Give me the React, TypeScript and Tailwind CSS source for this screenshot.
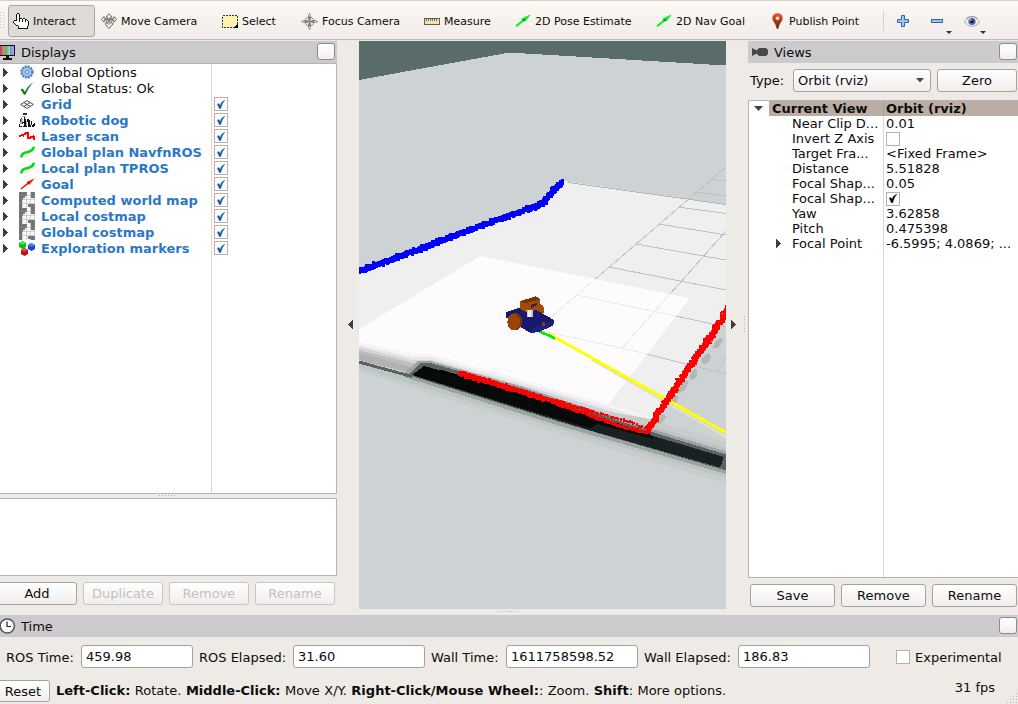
import React from 'react';

type Pt = [number, number];

function seeded(seed: number) {
  let s = seed;
  return () => {
    s = (s * 16807) % 2147483647;
    return s / 2147483647;
  };
}

/* Scan points scattered along a polyline, as one path of small squares. */
function scanPath(points: Pt[], size: number, spread: number, seed: number) {
  const rnd = seeded(seed);
  let d = '';
  for (let i = 0; i < points.length - 1; i++) {
    const [x0, y0] = points[i];
    const [x1, y1] = points[i + 1];
    const n = Math.max(1, Math.round(Math.hypot(x1 - x0, y1 - y0) / 1.5));
    for (let k = 0; k <= n; k++) {
      const x = Math.round(x0 + ((x1 - x0) * k) / n + (rnd() - 0.5) * spread - size / 2);
      const y = Math.round(y0 + ((y1 - y0) * k) / n + (rnd() - 0.5) * spread - size / 2);
      d += `M${x} ${y}h${size}v${size}h-${size}z`;
    }
  }
  return d;
}

/* ---------- icons ---------- */

const HandIcon = () => (
  <svg width="16" height="16" viewBox="0 0 16 16" shapeRendering="crispEdges">
    <path d="M4 1h3v5h7v2h1v6h-1v1H5v-2H3v-2H1V8h3z" fill="#fff" />
    <path d="M4 0h2v1H4zM3 1h1v7H3zM6 1h1v8H6zM7 5h2v1H7zM9 6h1v3H9zM10 5h2v1h-2zM12 6h1v3h-1zM13 6h1v1h-1zM14 7h1v1h-1zM15 8h1v5h-1zM14 13h1v3H5v-3h1v2h8zM1 7h2v1H1zM0 8h1v2H0zM1 10h1v1H1zM2 11h1v1H2zM3 12h2v1H3z" fill="#151515" />
  </svg>
);

const MoveIcon = () => (
  <svg width="16" height="16" viewBox="0 0 16 16" fill="none" stroke="#6b6b6b" strokeWidth="1">
    <path d="M8 .7 11 4H9.300v2.200l3.700-1V3.500l2.500 3L13 9.200V7.600L9.700 8l1.600 2.500 1 .2L8 15.500l-4-4.700h1L6.300 8 3 7.600v1.600L.5 6.500 3 3.500v1.700l3.700 1V4H5z" />
    <path d="m6 5 4 6M10 5l-4 6M3.500 6.500h9M8 5v7" strokeWidth=".8" />
  </svg>
);

const SelectIcon = () => (
  <svg width="16" height="13" viewBox="0 0 16 13" shapeRendering="crispEdges">
    <rect x=".5" y=".5" width="15" height="12" fill="#fff3b0" stroke="#333" strokeDasharray="2 1" />
    <path d="M16 9v4h-4v-1h1v-1h1v-1h1V9z" fill="#000" />
  </svg>
);

const FocusIcon = () => (
  <svg width="17" height="17" viewBox="0 0 17 17" fill="none" stroke="#858585" strokeWidth="1">
    <circle cx="8.500" cy="8.500" r="4.500" />
    <circle cx="8.500" cy="8.500" r="2" />
    <path d="M7.500 6V2.500l1-2 1 2V6M7.500 11v3.500l1 2 1-2V11M6 7.500H2.500l-2 1 2 1H6M11 7.500h3.500l2 1-2 1H11M8.500 4v9M4 8.500h9" />
  </svg>
);

const RulerIcon = () => (
  <svg width="16" height="7" viewBox="0 0 16 7" shapeRendering="crispEdges">
    <rect x=".5" y=".5" width="15" height="6" fill="#f0e2a8" stroke="#5e5e66" />
    <path d="M2.500 1v2M4.500 1v2M6.500 1v2M8.500 1v2M10.500 1v2M12.500 1v2" stroke="#77766a" />
  </svg>
);

const GreenArrowIcon = () => (
  <svg width="16" height="14" viewBox="0 0 16 14">
    <path d="M15.800.2 10.800 7.200 9.300 7 1.800 13 .3 11.500 7 6 6.500 4.500z" fill="#10f030" />
    <path d="m9.300 4.800-1.800.8.200 1.400 1.600.2 1-1.400z" fill="#0a8a20" />
  </svg>
);

const PinIcon = () => (
  <svg width="11" height="16" viewBox="0 0 11 16">
    <defs>
      <linearGradient id="pin" x1="0" y1="0" x2="0" y2="1">
        <stop offset="0" stopColor="#f0562f" />
        <stop offset="1" stopColor="#5a2408" />
      </linearGradient>
    </defs>
    <path d="M5.500.3C2.500.3.3 2.400.3 5.200c0 2 1.500 3.600 2.700 5.600.9 1.500 1.400 3.200 1.700 4.900h1.600c.3-1.700.8-3.400 1.700-4.900 1.200-2 2.700-3.600 2.700-5.600C10.700 2.400 8.500.3 5.500.3z" fill="url(#pin)" />
    <circle cx="5.500" cy="5.200" r="1.700" fill="#f8e6e0" />
  </svg>
);

const PlusIcon = () => (
  <svg width="12" height="12" viewBox="0 0 12 12">
    <path d="M4.500.5h3v4h4v3h-4v4h-3v-4h-4v-3h4z" fill="#9cc3ee" stroke="#2d68ad" />
  </svg>
);

const MinusIcon = () => (
  <svg width="12" height="4" viewBox="0 0 12 4">
    <rect x=".5" y=".5" width="11" height="3" fill="#9cc3ee" stroke="#2d68ad" />
  </svg>
);

const EyeIcon = () => (
  <svg width="16" height="11" viewBox="0 0 16 11">
    <path d="M.5 6C3 1.500 6 1 8 1s5 .5 7.500 5C13 9.500 10.500 10.300 8 10.300S3 9.500.5 6z" fill="#eeeef0" stroke="#aaa9ae" />
    <path d="M2 3C4 .8 6 .5 8 .5s4 .3 6 2.500" fill="none" stroke="#99989e" />
    <circle cx="8" cy="5.500" r="3.600" fill="#5266ad" />
    <circle cx="8" cy="5.500" r="1.700" fill="#101434" />
    <circle cx="6.800" cy="4.300" r=".8" fill="#dde3ff" />
  </svg>
);

const DownArrow = ({ className = '' }: { className?: string }) => (
  <svg width="6" height="3" viewBox="0 0 6 3" className={className}>
    <path d="M0 0h6L3 3z" fill="#303030" />
  </svg>
);

const MonitorIcon = () => (
  <svg width="16" height="16" viewBox="0 0 16 16" shapeRendering="crispEdges" className="shrink-0">
    <defs>
      <linearGradient id="scr" x1="0" y1="0" x2="1" y2="0">
        <stop offset="0" stopColor="#a83a48" />
        <stop offset=".36" stopColor="#d59a9a" />
        <stop offset=".37" stopColor="#48a860" />
        <stop offset=".68" stopColor="#a0dda8" />
        <stop offset=".69" stopColor="#8080dd" />
        <stop offset="1" stopColor="#b0b0ff" />
      </linearGradient>
    </defs>
    <rect x=".5" y="1.500" width="15" height="10" fill="url(#scr)" stroke="#111" />
    <path d="M7 12h3v2h3v2H4v-2h3z" fill="#111" />
  </svg>
);

const ClockIcon = () => (
  <svg width="16" height="16" viewBox="0 0 16 16" className="shrink-0">
    <circle cx="7.300" cy="8" r="7.100" fill="#fff" stroke="#55555a" strokeWidth="1.500" />
    <path d="M7 3.500v5h4" fill="none" stroke="#222" strokeWidth="1.200" />
  </svg>
);

const CameraIcon = () => (
  <svg width="16" height="8" viewBox="0 0 16 8">
    <path d="M0 0l5 2.500V2l2-2h7l2 2v4l-2 2H7L5 6v-.5L0 8z" fill="#464846" />
  </svg>
);

const GearIcon = () => (
  <svg width="14" height="14" viewBox="0 0 14 14">
    <circle cx="7" cy="7" r="5.700" fill="#a9c8ec" stroke="#4e7fbd" strokeWidth="2" strokeDasharray="1.900 1.080" />
    <circle cx="7" cy="7" r="4.700" fill="#a9c8ec" stroke="#5f90cc" />
    <circle cx="7" cy="7" r="1.900" fill="#dfeafa" stroke="#4e7fbd" />
  </svg>
);

const TickIcon = () => (
  <svg width="14" height="13" viewBox="0 0 14 13">
    <path d="M.6 7.500 2.700 6.500l2.200 3.300C7 5.500 9.500 2.200 13.500.2 10.200 3.500 7.700 7.500 5.500 12.700H4z" fill="#1d7a24" />
  </svg>
);

const GridIcon = () => (
  <svg width="14" height="9" viewBox="0 0 14 9" fill="none" stroke="#3a3a3a" strokeWidth=".9">
    <path d="M7 .6 13.400 4.500 7 8.400.6 4.500zM3.800 2.500l6.400 4M10.200 2.500l-6.400 4" />
  </svg>
);

const RobotIcon = () => (
  <svg width="16" height="15" viewBox="0 0 16 15" shapeRendering="crispEdges">
    <path d="M4 0h4v2H4z" fill="#26268a" />
    <path d="M3 3h4v1H3zM1 6h3v5H1zM7 8h1v5H7z" fill="#aaa" />
    <path d="M5 4h1v2h1v7h1v1H4v-1h1v-3H4V9h1zM8 6h2v1h1v5h1v2H9v-5H8zM0 11h1v2h2v1H0zM12 8h1v4h-1zM13 12h1v-1h1v-1h1v3h-1v1h-2z" fill="#111" />
    <path d="M1 6h1v3H1zM2 5h1v1H2zM3 9h1v2H3z" fill="#333" />
  </svg>
);

const LaserIcon = () => (
  <svg width="16" height="10" viewBox="0 0 16 10" shapeRendering="crispEdges">
    <path d="M0 4h2V3h3V2h1V1h4v5h1V5h3V4h1v1h1v4h-2V7h-2v1H8V3H7v1H5v2H4V5H2v1H0z" fill="#ff0000" />
  </svg>
);

const PathIcon = () => (
  <svg width="15" height="12" viewBox="0 0 15 12" fill="none" stroke="#00dd0a" strokeWidth="2.600">
    <path d="M1 11.500C1.800 7.800 3.300 7 6.800 6.200S13 4.500 14 .8" />
  </svg>
);

const GoalIcon = () => (
  <svg width="15" height="12" viewBox="0 0 15 12">
    <path d="M14.800.2 9.800 6.400 8.300 6.300 1.300 11.500.3 10.400 6.800 5.200 7 3.800z" fill="#f52015" />
    <path d="m8.800 4.200-1.400.5.300 1.300 1.500.2z" fill="#a81008" />
  </svg>
);

const MapIcon = () => (
  <svg width="16" height="16" viewBox="0 0 16 16" shapeRendering="crispEdges">
    <rect width="16" height="16" fill="#fbfbfb" />
    <path d="M0 0h8v4H6v2H4v2H3v8H0zM12 0h4v6h-4zM9 12h7v4h-4v-1H9z" fill="#737373" />
    <path d="M3.500 0v16M7.500 0v16M11.500 0v16M15.500 0v16M0 3.500h16M0 7.500h16M0 11.500h16" stroke="#8e8e8e" strokeOpacity=".4" />
  </svg>
);

const MarkersIcon = () => (
  <svg width="16" height="15" viewBox="0 0 16 15">
    <path d="M0 2 3.500 0 7 2v4L3.500 8 0 6z" fill="#0cc010" />
    <path d="m0 2 3.500 1.700L7 2 3.500 0z" fill="#40ee40" />
    <path d="m9 4 3.500-2L16 4v4l-3.500 2L9 8z" fill="#2048cc" />
    <path d="m9 4 3.500 1.700L16 4l-3.500-2z" fill="#5080f0" />
    <path d="m2 9 3.500-2L9 9v4l-3.500 2L2 13z" fill="#b81515" />
    <path d="m2 9 3.500 1.700L9 9 5.500 7z" fill="#e84848" />
  </svg>
);

const RightArrow = () => (
  <svg width="5" height="9" viewBox="0 0 5 9" shapeRendering="crispEdges">
    <path d="M0 0 5 4.500 0 9z" fill="#404040" />
  </svg>
);

const LeftArrow = () => (
  <svg width="5" height="9" viewBox="0 0 5 9" shapeRendering="crispEdges">
    <path d="M5 0 0 4.500 5 9z" fill="#404040" />
  </svg>
);

/* ---------- widgets ---------- */

function CheckBox({ checked = false, color = '#1a5c9c' }: { checked?: boolean; color?: string }) {
  return (
    <span className="flex h-[14px] w-[14px] shrink-0 items-center justify-center border border-[#b4b0ab] bg-white">
      {checked && (
        <svg width="8" height="9" viewBox="0 0 8 9">
          <path d="M.3 4.200 1.800 3.600 3 5.500C4 3 5.300 1.200 7.800.2 5.800 2.500 4.500 5.200 3.700 8.800H2.500z" fill={color} stroke={color} strokeWidth=".5" />
        </svg>
      )}
    </span>
  );
}

function Button({ children, className = '', disabled = false }: { children: React.ReactNode; className?: string; disabled?: boolean }) {
  return (
    <button
      className={`flex shrink-0 items-center justify-center rounded-[3px] border bg-gradient-to-b from-white to-[#f1eded] leading-none ${
        disabled ? 'border-[#c9c5c3] text-[#c2c0c0]' : 'border-[#a5a2a0] text-[#0c0c0c]'
      } ${className}`}
    >
      {children}
    </button>
  );
}

function TitleBar({ icon, title, className = '' }: { icon: React.ReactNode; title: string; className?: string }) {
  return (
    <div className={`flex shrink-0 items-center bg-[#cdcacd] ${className}`}>
      {icon}
      <span className="leading-none">{title}</span>
      <span className="mb-[2px] ml-auto h-[17px] w-[18px] shrink-0 rounded-[3px] border border-[#8f8b8c] bg-gradient-to-b from-white to-[#f3eeee]" />
    </div>
  );
}

function Dots() {
  return (
    <svg width="17" height="2" viewBox="0 0 17 2" shapeRendering="crispEdges">
      <path d="M0 .5h17" stroke="#b5b0ac" strokeDasharray="1 2" />
    </svg>
  );
}

const DotColumn = () => (
  <svg width="2" height="17" viewBox="0 0 2 17" shapeRendering="crispEdges">
    <path d="M.5 0v17" stroke="#c9c5c0" strokeDasharray="1 2" />
  </svg>
);

/* ---------- toolbar ---------- */

const tools = [
  { label: 'Interact', icon: <HandIcon />, box: 'ml-[8px] w-[87px] rounded-[3px] border border-[#aaa7a3] bg-[#dfdcd7] pl-[4px]', cell: 'w-[20px]' },
  { label: 'Move Camera', icon: <MoveIcon />, box: 'ml-[6px] w-[121px]', cell: 'w-[20px]' },
  { label: 'Select', icon: <SelectIcon />, box: 'w-[79px]', cell: 'w-[20px]' },
  { label: 'Focus Camera', icon: <FocusIcon />, box: 'w-[123px]', cell: 'w-[21px]' },
  { label: 'Measure', icon: <RulerIcon />, box: 'w-[91px]', cell: 'w-[20px]' },
  { label: '2D Pose Estimate', icon: <GreenArrowIcon />, box: 'w-[141px]', cell: 'w-[20px]' },
  { label: '2D Nav Goal', icon: <GreenArrowIcon />, box: 'w-[116px]', cell: 'w-[20px]' },
  { label: 'Publish Point', icon: <PinIcon />, box: 'w-[111px]', cell: 'w-[17px]' },
];

function Toolbar() {
  return (
    <header className="relative flex h-[41px] shrink-0 items-center border-y border-t-[#d3cfca] border-b-[#e9e8e3] bg-gradient-to-b from-[#fff8f6] via-[#f5f2ed] to-[#f6ebec] text-[11px] shadow-[inset_0_-1px_0_#b9bfb5]">
      <svg className="absolute left-0 top-[11px]" width="5" height="17" shapeRendering="crispEdges">
        <path d="M.5 0v17M3.500 0v17" stroke="#ccc7c3" strokeDasharray="1 2" />
      </svg>
      {tools.map((t) => (
        <div key={t.label} className={`flex h-[32px] shrink-0 items-center whitespace-nowrap ${t.box}`}>
          <span className={`shrink-0 pt-px ${t.cell}`}>{t.icon}</span>
          <span className="pt-[3px]">{t.label}</span>
        </div>
      ))}
      <span className="h-[20px] w-px bg-[#d3cfcc]" />
      <span className="ml-[13px] pt-px"><PlusIcon /></span>
      <span className="ml-[22px] pt-px"><MinusIcon /></span>
      <DownArrow className="ml-[3px] mt-[23px]" />
      <span className="ml-[12px] pt-px"><EyeIcon /></span>
      <DownArrow className="mt-[23px]" />
    </header>
  );
}

/* ---------- displays ---------- */

const displays = [
  { name: 'Global Options', icon: <GearIcon />, plain: true },
  { name: 'Global Status: Ok', icon: <TickIcon />, plain: true },
  { name: 'Grid', icon: <GridIcon /> },
  { name: 'Robotic dog', icon: <RobotIcon /> },
  { name: 'Laser scan', icon: <LaserIcon /> },
  { name: 'Global plan NavfnROS', icon: <PathIcon /> },
  { name: 'Local plan TPROS', icon: <PathIcon /> },
  { name: 'Goal', icon: <GoalIcon /> },
  { name: 'Computed world map', icon: <MapIcon /> },
  { name: 'Local costmap', icon: <MapIcon /> },
  { name: 'Global costmap', icon: <MapIcon /> },
  { name: 'Exploration markers', icon: <MarkersIcon /> },
];

function DisplaysPanel() {
  return (
    <section className="flex w-[337px] shrink-0 flex-col">
      <TitleBar icon={<span className="mr-[6px] -ml-px"><MonitorIcon /></span>} title="Displays" className="h-[22px] pr-[2px]" />
      <div className="flex h-[431px] flex-col border-y border-r border-[#b9b3b3] bg-white">
        <div className="grid h-full grid-cols-[212px_1fr]">
          <div className="border-r border-[#d8d6d6]">
            {displays.map((d) => (
              <div key={d.name} className="flex h-[16px] items-center whitespace-nowrap">
                <span className="w-[19px] pl-[3px]"><RightArrow /></span>
                <span className="flex w-[22px] items-center"><span className="flex w-[16px] justify-center">{d.icon}</span></span>
                <span className={d.plain ? 'pt-[2px] leading-[16px]' : 'pt-[2px] font-bold leading-[16px] text-[#2b78c5]'}>{d.name}</span>
              </div>
            ))}
          </div>
          <div className="pl-[2px]">
            {displays.map((d) => (
              <div key={d.name} className="flex h-[16px] items-center">{!d.plain && <CheckBox checked />}</div>
            ))}
          </div>
        </div>
      </div>
      <div className="flex h-[4px] items-center justify-center pr-[2px]"><Dots /></div>
      <div className="h-[78px] border-y border-r border-[#b9b3b3] bg-white" />
      <div className="mt-[6px] flex">
        <Button className="-ml-[4px] h-[23px] w-[81px] pl-px">Add</Button>
        <Button disabled className="ml-[6px] h-[23px] w-[80px]">Duplicate</Button>
        <Button disabled className="ml-[6px] h-[23px] w-[80px]">Remove</Button>
        <Button disabled className="ml-[6px] h-[23px] w-[80px]">Rename</Button>
      </div>
    </section>
  );
}

/* ---------- 3D view ---------- */

const BLUE: Pt[] = [[359, 271.5], [405, 254.5], [451, 237], [497, 220], [543, 203.5], [550, 194], [562, 182.5]];
const RED_WALL: Pt[] = [[729, 309], [708, 340], [690, 366], [672, 393], [658, 413], [648, 429]];
const RED_LOW: Pt[] = [[461, 373.5], [485, 380.5], [509, 388], [539, 397.500], [559, 403]];
const RED_FORK_A: Pt[] = [[556, 401], [592, 411], [626, 421], [646, 428]];
const RED_FORK_B: Pt[] = [[556, 403.5], [592, 416], [620, 426], [648, 433]];

function Scene() {
  return (
    <svg className="block h-[568px] w-[367px]" viewBox="359 41 367 568" shapeRendering="crispEdges">
      <defs>
        <clipPath id="costmap">
          <path d="M359 329 480 256 690 298 605 409 359 346z" />
        </clipPath>
      </defs>
      <rect x="359" y="41" width="367" height="568" fill="#5a6c69" />
      <path d="M359 80 504 53.500 517 53 726 65.500V609H359z" fill="#cdd3d5" />
      <path d="M359 271 543 205 563 181 726 204V315L648 432 359 350z" fill="#eeefee" />
      <path d="M359 275 543 207.500" stroke="#f1edff" strokeWidth="3" />
      <path d="M568 182.500 726 204.500" stroke="#b3b6b6" />

      <g fill="none" stroke="#bfbfc8">
        <path d="M726 167 550 318M726 231 622 348M710 179l16 2M695 192l31 4M678 207l48 6.500M659 224l67 11M636 244l90 16M609 267l117 23M576 295l100 21 50 11M546 332l76 16 104 26M717 372l9-14" />
      </g>

      <path d="M359 329 480 256 690 298 605 409 359 346z" fill="#fefbfe" />
      <g clipPath="url(#costmap)" fill="none" stroke="#ebe9ec">
        <path d="M726 167 550 318M726 231 622 348M576 295l100 21M546 332l76 16 104 26" />
      </g>

      <path d="M359 342 412 353 430 354 602 402 650 417V432L425 372 359 364z" fill="#f7f4f7" />
      <path d="M359 345 412 357 430 357 602 405 650 420V432L425 372 359 364z" fill="#eae8ea" />
      <path d="M359 347 412 360 432 360 560 396 650 423V432L425 372 359 364z" fill="#d6d4d6" />
      <path d="M359 350 412 363 416 364 408 373 359 360z" fill="#bfbdbf" />
      <path d="M359 353 410 367 408 372 359 360z" fill="#b2b0b2" />

      <path d="M650 419 726 442V483L720 482 540 428 412 388 359 371V361L412 376z" fill="#cacccb" />
      <path d="M652 426 726 448V478L560 429 412 384 359 367.500V361L412 376z" fill="#bbc5c4" />
      <path d="M404 373 418 361 430 361 520 386 655 430 726 451.500V474L560 426 404 377z" fill="#9ca3a3" />
      <path d="M408 375 420 363.500 430 363 520 388 655 433 726 454.500V470.500L560 422z" fill="#5b6263" />
      <path d="M359 362 412 376.500" stroke="#5b6263" strokeWidth="3" />
      <path d="M412 375 424 366 500 386 650 435 724 457 720 467.500 592 431z" fill="#1a2123" />
      <path d="M412 375 424 366 500 386 653 437 653 439 598 424 590 428.500z" fill="#080a09" />
      <path d="M440 371 590 416 650 435" fill="none" stroke="#000" strokeWidth="3" />

      <path d="M715 341l5-3 3 1-2 6-4 3-4 0zM705 355l4-2 2 4-3 6-5 1-2-4zM691 373l3-4 3 1v7l-5 3-3-2zM680 386l6-6 2 2-2 7-6 4-4-3zM671 401l3-5 4 0-1 6-5 4-3-1zM659 416l5-2 2 3-4 6-5 1-2-3z" fill="#b3b7b7" />

      <path d="M592 359.500 726 437" stroke="#e0e1c6" strokeWidth="2.500" />
      <path d="M548 333.500 726 432.500" stroke="#ffff00" strokeWidth="3" />
      <path d="M539 331 555 338.500" stroke="#00f000" strokeWidth="2.600" />

      <path d={scanPath(BLUE, 5, 1.600, 11)} fill="#0000ff" />
      <path d={scanPath(BLUE, 3, 5, 19)} fill="#0000ff" />
      <path d={scanPath(RED_WALL, 5, 2.400, 23)} fill="#ff0000" />
      <path d={scanPath(RED_WALL, 2, 7, 29)} fill="#ff0000" />
      <path d={scanPath(RED_LOW, 4, 2.400, 5)} fill="#ff0000" />
      <path d={scanPath(RED_LOW, 3, 4, 77)} fill="#ff0000" />
      <path d={scanPath(RED_FORK_A, 2, 1.800, 31)} fill="#ff0000" />
      <path d={scanPath(RED_FORK_B, 3, 1.600, 47)} fill="#ff0000" />
      <path d={scanPath([[556, 402], [592, 412.5]], 2, 3, 91)} fill="#ff0000" />

      <g transform="translate(490 280) scale(.33333)">
        <ellipse cx="152" cy="90" rx="11" ry="17" fill="#a34c06" />
        <path d="M48 96 90 83 130 85 192 120 190 136 145 157 122 158 95 144 48 112z" fill="#191970" />
        <path d="M125 147 192 122 190 136 145 157 124 158z" fill="#202082" />
        <path d="M91 63 105 69 151 59 152 86 112 97 91 88z" fill="#a34c06" />
        <path d="M91 63 138 49 151 58 105 70z" fill="#7b3503" />
        <path d="M109 91h20v19h-17z" fill="#c9c9cc" />
        <path d="M115 91h8v19h-8z" fill="#f0f0f0" />
        <path d="M123 75 140 69v6l-16 8z" fill="#28206a" />
        <ellipse cx="76" cy="125" rx="21" ry="26" fill="#783302" />
        <ellipse cx="71" cy="126" rx="19" ry="25" fill="#9a4505" />
        <path d="M155 128 166 125 165 136 155 140z" fill="#8c3e08" />
      </g>
    </svg>
  );
}

/* ---------- views ---------- */

const properties: { name: string; value?: string; box?: 'on' | 'off'; arrow?: boolean }[] = [
  { name: 'Near Clip D...', value: '0.01' },
  { name: 'Invert Z Axis', box: 'off' },
  { name: 'Target Fra...', value: '<Fixed Frame>' },
  { name: 'Distance', value: '5.51828' },
  { name: 'Focal Shap...', value: '0.05' },
  { name: 'Focal Shap...', box: 'on' },
  { name: 'Yaw', value: '3.62858' },
  { name: 'Pitch', value: '0.475398' },
  { name: 'Focal Point', value: '-6.5995; 4.0869; ...', arrow: true },
];

function ViewsPanel() {
  return (
    <section className="flex w-[270px] shrink-0 flex-col">
      <TitleBar icon={<span className="ml-[4px] mr-[6px]"><CameraIcon /></span>} title="Views" className="h-[22px] pr-px" />
      <div className="mt-[6px] flex items-center">
        <span className="w-[45px] pl-[2px]">Type:</span>
        <div className="flex h-[23px] w-[138px] items-center justify-between rounded-[3px] border border-[#a5a2a0] bg-gradient-to-b from-white to-[#f1eded] pl-[4px] pr-[6px] leading-none">
          Orbit (rviz)
          <svg width="8" height="5" viewBox="0 0 8 5"><path d="M0 0h8L4 4.500z" fill="#4a4a4a" /></svg>
        </div>
        <Button className="ml-[6px] h-[23px] w-[80px]">Zero</Button>
      </div>
      <div className="mt-[8px] flex h-[478px] flex-col border-y border-l border-[#b9b3b3] bg-white">
        <div className="flex h-[15px] shrink-0 items-center font-bold leading-[15px]">
          <span className="flex w-[20px] shrink-0 justify-center pr-px">
            <svg width="9" height="5" viewBox="0 0 9 5"><path d="M0 0h9L4.500 5z" fill="#404040" /></svg>
          </span>
          <span className="h-full w-[115px] border-r border-[#a99d96] bg-[#bbada4] pl-[3px]">Current View</span>
          <span className="h-full flex-1 bg-[#bbada4] pl-[2px]">Orbit (rviz)</span>
        </div>
        {properties.map((p, i) => (
          <div key={i} className="flex h-[15px] shrink-0 items-center whitespace-nowrap leading-[15px]">
            <span className="w-[43px] shrink-0 pl-[27px]">{p.arrow && <RightArrow />}</span>
            <span className="h-full w-[92px] shrink-0 border-r border-[#d8d6d6]">{p.name}</span>
            <span className={`flex h-full items-center pl-[2px] ${p.value === '<Fixed Frame>' ? 'tracking-[0.13px]' : ''}`}>
              {p.box ? <CheckBox checked={p.box === 'on'} color="#000000" /> : p.value}
            </span>
          </div>
        ))}
        <div className="flex flex-1"><span className="w-[135px] border-r border-[#d8d6d6]" /></div>
      </div>
      <div className="mt-[6px] flex gap-[6px] pl-[2px]">
        <Button className="h-[23px] w-[85px]">Save</Button>
        <Button className="h-[23px] w-[85px]">Remove</Button>
        <Button className="h-[23px] w-[85px]">Rename</Button>
      </div>
    </section>
  );
}

/* ---------- time + status ---------- */

const fields = [
  { label: 'ROS Time:', value: '459.98', lw: 'w-[75px]', iw: 'w-[112px]' },
  { label: 'ROS Elapsed:', value: '31.60', lw: 'w-[94px]', iw: 'w-[132px]' },
  { label: 'Wall Time:', value: '1611758598.52', lw: 'w-[75px]', iw: 'w-[132px]' },
  { label: 'Wall Elapsed:', value: '186.83', lw: 'w-[94px]', iw: 'w-[132px]' },
];

function TimePanel() {
  return (
    <section>
      <TitleBar icon={<span className="mr-[5px]"><ClockIcon /></span>} title="Time" className="h-[22px] pr-px" />
      <div className="mt-[8px] flex h-[23px] items-center whitespace-nowrap pl-[6px]">
        {fields.map((f) => (
          <div key={f.label} className="mr-[6px] flex items-center">
            <span className={`pt-[2px] ${f.lw}`}>{f.label}</span>
            <span className={`flex h-[23px] items-center rounded-[3px] border border-[#a5a2a0] bg-white pl-[4px] ${f.iw}`}>{f.value}</span>
          </div>
        ))}
        <span className="ml-[20px]"><CheckBox /></span>
        <span className="pl-[5px] pt-[2px]">Experimental</span>
      </div>
    </section>
  );
}

function StatusBar() {
  return (
    <footer className="relative mt-[11px] flex h-[24px] items-center whitespace-nowrap">
      <Button className="-ml-[4px] h-[22px] w-[54px]">Reset</Button>
      <p className="ml-[6px] [word-spacing:0.27px]">
        <b>Left-Click:</b> Rotate. <b>Middle-Click:</b> Move X/Y. <b>Right-Click/Mouse Wheel:</b>: Zoom. <b>Shift</b>: More options.
      </p>
      <span className="mb-[7px] ml-auto mr-[23px]">31 fps</span>
      <svg className="absolute -bottom-px right-0" width="12" height="12" shapeRendering="crispEdges" fill="#b8b4b0">
        <path d="M10 1h1v1h-1zM7 4h1v1H7zM10 4h1v1h-1zM4 7h1v1H4zM7 7h1v1H7zM10 7h1v1h-1zM1 10h1v1H1zM4 10h1v1H4zM7 10h1v1H7zM10 10h1v1h-1z" />
      </svg>
    </footer>
  );
}

export default function App() {
  return (
    <div className="flex h-[704px] w-[1018px] flex-col overflow-hidden bg-[#eeebe7] font-['DejaVu_Sans',sans-serif] text-[13px] leading-[16px] text-[#0c0c0c]">
      <Toolbar />
      <main className="flex h-[574px] shrink-0">
        <DisplaysPanel />
        <div className="flex w-[22px] shrink-0 items-center justify-end pb-[8px] pr-[6px]"><LeftArrow /></div>
        <div className="flex w-[367px] shrink-0 flex-col">
          <Scene />
          <div className="flex h-[6px] items-center justify-center pr-[70px]"><Dots /></div>
        </div>
        <div className="flex w-[22px] shrink-0 items-center gap-[8px] pb-[8px] pl-[5px]"><RightArrow /><DotColumn /></div>
        <ViewsPanel />
      </main>
      <TimePanel />
      <StatusBar />
    </div>
  );
}
